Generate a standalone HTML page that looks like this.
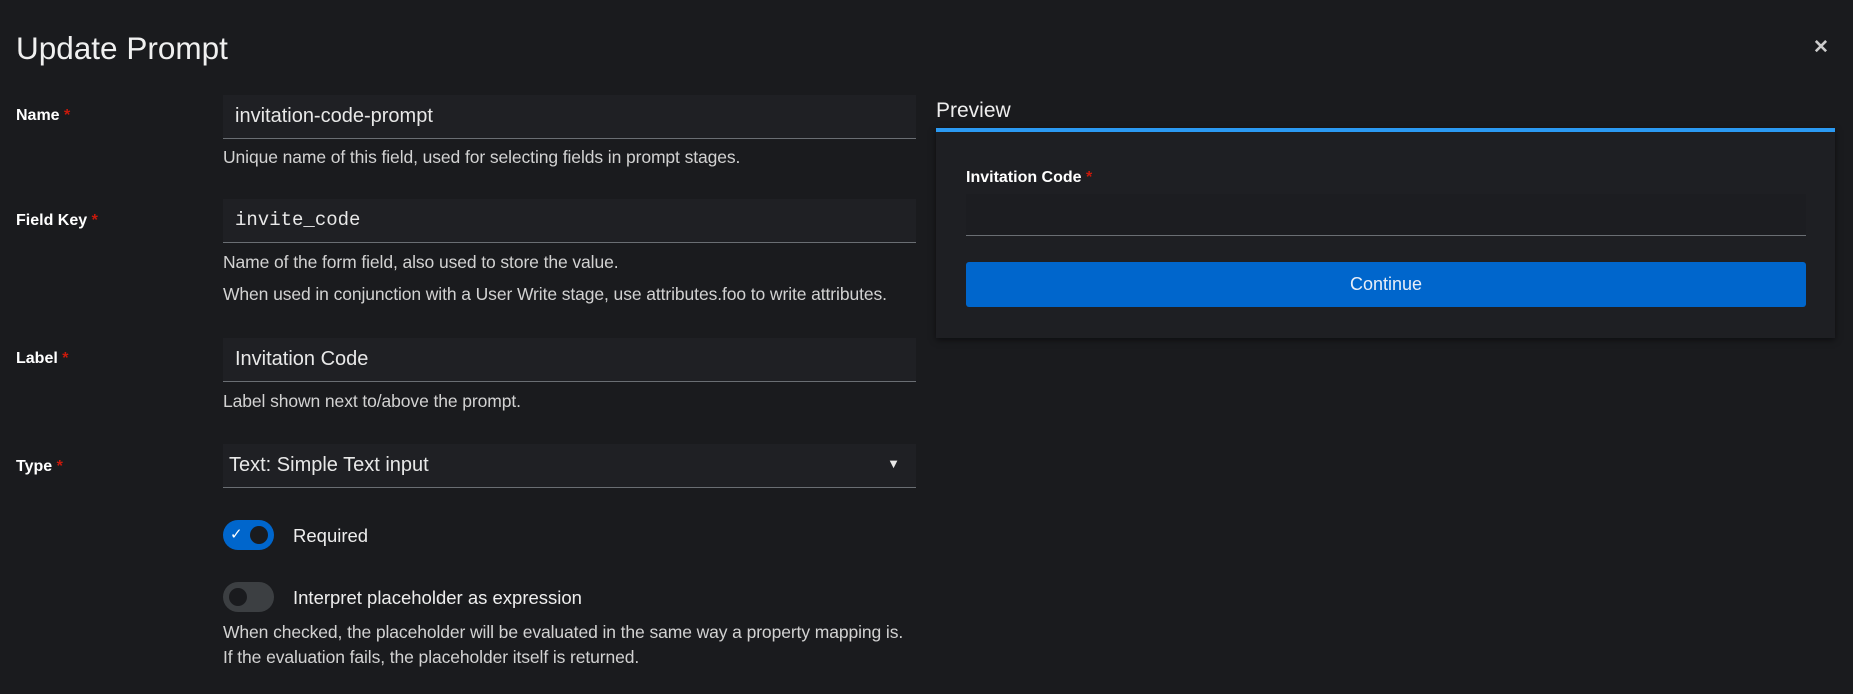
<!DOCTYPE html>
<html><head><style>
*{box-sizing:border-box;margin:0;padding:0}
body{width:1853px;height:694px;background:#1a1b1e;font-family:"Liberation Sans",sans-serif;color:#e0e0e0;position:relative;overflow:hidden}
.abs{position:absolute}
h1{position:absolute;left:16px;top:30px;font-size:31.5px;font-weight:400;color:#f0f0f0}
.lbl{position:absolute;left:16px;font-size:16px;font-weight:700;color:#fff}
.lbl span,.star{color:#c9190b}
.inp{position:absolute;left:223px;width:693px;height:44px;background:#1f2024;border-bottom:1px solid #6a6e73;font-size:20px;color:#e8e8e8;padding:10px 12px}
.help{position:absolute;left:223px;font-size:17.5px;color:#d2d2d2;letter-spacing:-0.1px}
.tog{position:absolute;left:223px;width:51px;height:30px;border-radius:15px}
.tog i{position:absolute;top:6px;width:18px;height:18px;border-radius:50%;background:#1a1b1e}
.tl{position:absolute;left:293px;font-size:18.5px;color:#eee}
</style></head><body>
<h1>Update Prompt</h1>
<div class="abs" style="left:1813px;top:36px;font-size:19px;font-weight:700;color:#ccc">✕</div>

<div class="lbl" style="top:107px">Name <span>*</span></div>
<div class="inp" style="top:95px">invitation-code-prompt</div>
<div class="help" style="top:147px">Unique name of this field, used for selecting fields in prompt stages.</div>

<div class="lbl" style="top:212px">Field Key <span>*</span></div>
<div class="inp" style="top:199px;font-family:'Liberation Mono',monospace;font-size:19px">invite_code</div>
<div class="help" style="top:252px">Name of the form field, also used to store the value.</div>
<div class="help" style="top:284px">When used in conjunction with a User Write stage, use attributes.foo to write attributes.</div>

<div class="lbl" style="top:350px">Label <span>*</span></div>
<div class="inp" style="top:338px">Invitation Code</div>
<div class="help" style="top:391px">Label shown next to/above the prompt.</div>

<div class="lbl" style="top:458px">Type <span>*</span></div>
<div class="inp" style="top:444px;padding-left:6px">Text: Simple Text input<span style="position:absolute;right:16px;top:12px;font-size:13px">▼</span></div>

<div class="tog" style="top:520px;background:#0066cc"><span class="abs" style="left:7px;top:5px;font-size:15px;color:#fff">✓</span><i style="left:27px"></i></div>
<div class="tl" style="top:525px">Required</div>
<div class="tog" style="top:582px;background:#3c3f42"><i style="left:6px"></i></div>
<div class="tl" style="top:587px">Interpret placeholder as expression</div>
<div class="help" style="top:622px">When checked, the placeholder will be evaluated in the same way a property mapping is.</div>
<div class="help" style="top:647px">If the evaluation fails, the placeholder itself is returned.</div>

<div class="abs" style="left:936px;top:99px;font-size:21px;color:#eee">Preview</div>
<div class="abs" style="left:936px;top:128px;width:899px;height:210px;background:#1e1f23;border-top:4px solid #2b9af3;box-shadow:0 2px 6px rgba(0,0,0,.5)">
 <div class="abs" style="left:30px;top:37px;font-size:16px;font-weight:700;color:#fff">Invitation Code <span class="star">*</span></div>
 <div class="abs" style="left:30px;top:62px;width:840px;height:42px;background:#1c1d21;border-bottom:1px solid #6a6e73"></div>
 <div class="abs" style="left:30px;top:130px;width:840px;height:45px;background:#0066cc;border-radius:3px;color:#e8eef8;font-size:18px;text-align:center;line-height:45px">Continue</div>
</div>
</body></html>
